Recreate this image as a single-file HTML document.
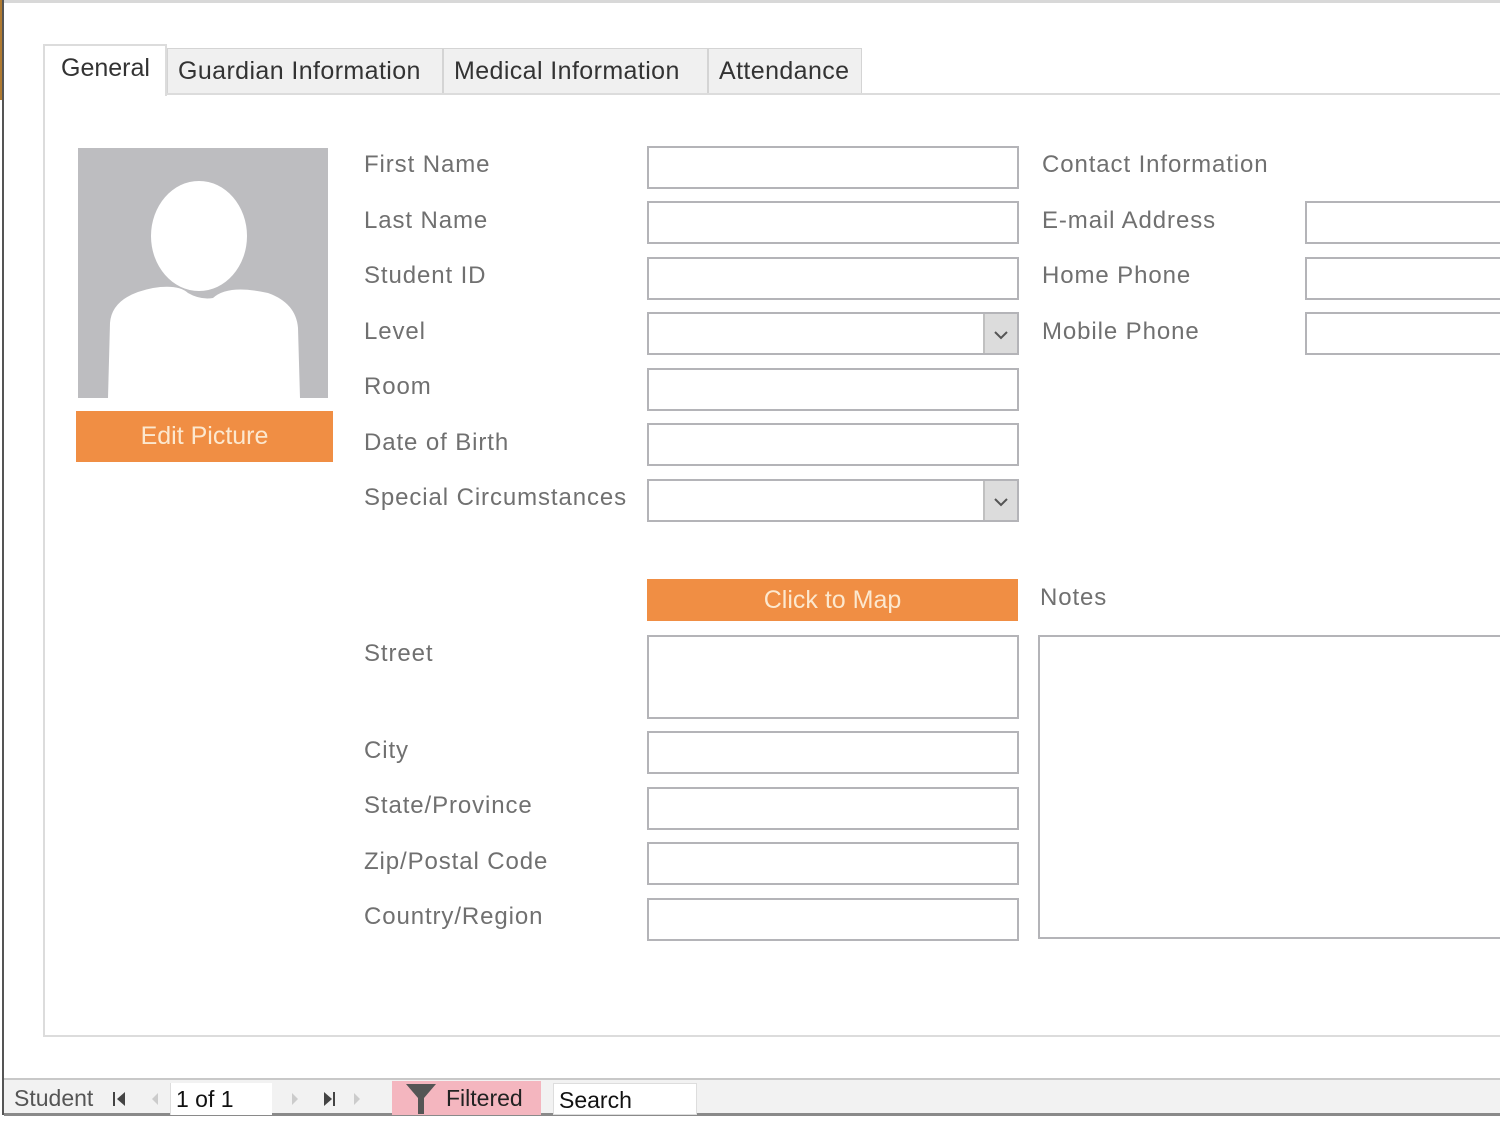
<!DOCTYPE html>
<html><head><meta charset="utf-8">
<style>
*{margin:0;padding:0;box-sizing:border-box}
body{width:1500px;height:1126px;background:#fff;position:relative;overflow:hidden;font-family:"Liberation Sans",sans-serif}
.a{position:absolute}
.lbl{position:absolute;font-size:24px;color:#707070;white-space:nowrap;letter-spacing:0.9px}
.box{position:absolute;border:2px solid #b4b4b8;background:#fff}
.tab{position:absolute;top:48px;height:45px;background:#f0f0f0;border:1px solid #d4d4d4;border-bottom:none;font-size:25px;color:#333;padding:8px 10px 0;text-align:left;white-space:nowrap;letter-spacing:0.4px}
.dd{position:absolute;right:0;top:0;width:34px;height:100%;background:#dcdcdc;border-left:2px solid #c0c0c0}
.btn{position:absolute;background:#f08e44;color:#fce8cf;font-size:25px;text-align:center}
</style></head><body>
<div class="a" style="left:0;top:0;width:1500px;height:3px;background:#d8d8d8"></div>
<div class="a" style="left:2px;top:0;width:2px;height:1115px;background:#555"></div>
<div class="a" style="left:0;top:0;width:2px;height:100px;background:#b07a30"></div>
<div class="a" style="left:43px;top:93px;width:1470px;height:944px;border:2px solid #dcdcdc;border-right:none"></div>
<div class="tab" style="left:167px;width:276px">Guardian Information</div>
<div class="tab" style="left:443px;width:265px">Medical Information</div>
<div class="tab" style="left:708px;width:154px">Attendance</div>
<div class="a" style="left:43px;top:44px;width:124px;height:52px;background:#fff;border:2px solid #dcdcdc;border-bottom:none;font-size:25px;color:#333;padding:8px 0 0 16px">General</div>
<svg class="a" style="left:78px;top:148px" width="250" height="250" viewBox="0 0 250 250">
<rect width="250" height="250" fill="#bdbdc0"/>
<path d="M30 250 L32 175 Q34 148 75 140 Q100 136 110 145 Q122 152 135 150 Q150 136 190 145 Q218 155 220 180 L222 250 Z" fill="#fff"/>
<ellipse cx="121" cy="88" rx="48" ry="55" fill="#fff"/>
</svg>
<div class="btn" style="left:76px;top:411px;width:257px;height:51px;line-height:51px">Edit Picture</div>
<div class="lbl" style="left:364px;top:151px">First Name</div>
<div class="lbl" style="left:364px;top:207px">Last Name</div>
<div class="lbl" style="left:364px;top:262px">Student ID</div>
<div class="lbl" style="left:364px;top:318px">Level</div>
<div class="lbl" style="left:364px;top:373px">Room</div>
<div class="lbl" style="left:364px;top:429px">Date of Birth</div>
<div class="lbl" style="left:364px;top:484px">Special Circumstances</div>
<div class="lbl" style="left:364px;top:640px">Street</div>
<div class="lbl" style="left:364px;top:737px">City</div>
<div class="lbl" style="left:364px;top:792px">State/Province</div>
<div class="lbl" style="left:364px;top:848px">Zip/Postal Code</div>
<div class="lbl" style="left:364px;top:903px">Country/Region</div>
<div class="box" style="left:647px;top:146px;width:372px;height:43px"></div>
<div class="box" style="left:647px;top:201px;width:372px;height:43px"></div>
<div class="box" style="left:647px;top:257px;width:372px;height:43px"></div>
<div class="box" style="left:647px;top:312px;width:372px;height:43px"><div class="dd"><svg width="32" height="39"><path d="M10 18 L16 24 L22 18" fill="none" stroke="#555" stroke-width="2"/></svg></div></div>
<div class="box" style="left:647px;top:368px;width:372px;height:43px"></div>
<div class="box" style="left:647px;top:423px;width:372px;height:43px"></div>
<div class="box" style="left:647px;top:479px;width:372px;height:43px"><div class="dd"><svg width="32" height="39"><path d="M10 18 L16 24 L22 18" fill="none" stroke="#555" stroke-width="2"/></svg></div></div>
<div class="btn" style="left:647px;top:579px;width:371px;height:42px;line-height:42px">Click to Map</div>
<div class="box" style="left:647px;top:635px;width:372px;height:84px"></div>
<div class="box" style="left:647px;top:731px;width:372px;height:43px"></div>
<div class="box" style="left:647px;top:787px;width:372px;height:43px"></div>
<div class="box" style="left:647px;top:842px;width:372px;height:43px"></div>
<div class="box" style="left:647px;top:898px;width:372px;height:43px"></div>
<div class="lbl" style="left:1042px;top:151px">Contact Information</div>
<div class="lbl" style="left:1042px;top:207px">E-mail Address</div>
<div class="lbl" style="left:1042px;top:262px">Home Phone</div>
<div class="lbl" style="left:1042px;top:318px">Mobile Phone</div>
<div class="box" style="left:1305px;top:201px;width:220px;height:43px"></div>
<div class="box" style="left:1305px;top:257px;width:220px;height:43px"></div>
<div class="box" style="left:1305px;top:312px;width:220px;height:43px"></div>
<div class="lbl" style="left:1040px;top:584px">Notes</div>
<div class="box" style="left:1038px;top:635px;width:480px;height:304px"></div>
<div class="a" style="left:4px;top:1078px;width:1496px;height:38px;background:#f2f2f2;border-top:2px solid #c8c8c8;border-bottom:3px solid #8a8a8a"></div>
<div class="a" style="left:14px;top:1085px;font-size:23px;color:#555">Student</div>
<svg class="a" style="left:110px;top:1090px" width="20" height="18"><rect x="3" y="2" width="2" height="14" fill="#444"/><path d="M15 2 L7 9 L15 16Z" fill="#444"/></svg>
<svg class="a" style="left:148px;top:1090px" width="14" height="18"><path d="M10 3 L4 9 L10 15Z" fill="#ccc"/></svg>
<div class="a" style="left:170px;top:1083px;width:102px;height:32px;background:#fff;border-left:1px solid #ddd;font-size:23px;color:#111;padding:3px 0 0 5px">1 of 1</div>
<svg class="a" style="left:288px;top:1090px" width="14" height="18"><path d="M4 3 L10 9 L4 15Z" fill="#ccc"/></svg>
<svg class="a" style="left:320px;top:1090px" width="20" height="18"><path d="M4 2 L12 9 L4 16Z" fill="#444"/><rect x="13" y="2" width="2" height="14" fill="#444"/></svg>
<svg class="a" style="left:350px;top:1090px" width="14" height="18"><path d="M4 3 L10 9 L4 15Z" fill="#ccc"/></svg>
<div class="a" style="left:392px;top:1081px;width:149px;height:34px;background:#f4b6bf;font-size:23px;color:#222;padding:4px 0 0 54px">Filtered</div>
<svg class="a" style="left:404px;top:1082px" width="34" height="34"><path d="M2 2 L32 2 L20 16 L20 32 L14 32 L14 16Z" fill="#555"/></svg>
<div class="a" style="left:553px;top:1083px;width:144px;height:32px;background:#fff;border:1px solid #ddd;font-size:23px;color:#111;padding:3px 0 0 5px">Search</div>
</body></html>
